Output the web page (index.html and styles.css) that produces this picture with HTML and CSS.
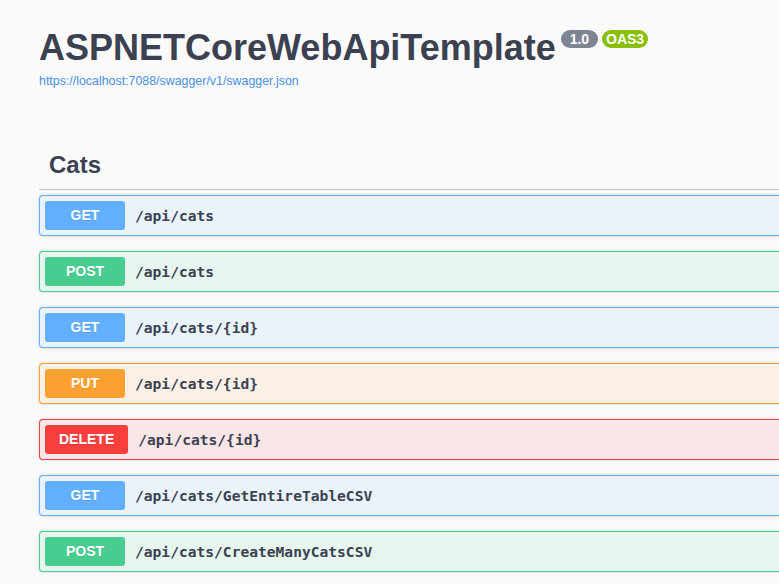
FILE: index.html
```html
<!DOCTYPE html>
<html lang="en">
<head>
<meta charset="utf-8">
<title>Swagger UI</title>
<link rel="stylesheet" href="styles.css">
</head>
<body>
<div class="wrapper">
  <div class="info">
    <h2 class="title"><span class="title-text">ASPNETCoreWebApiTemplate</span><small class="badge badge-version"><pre class="version"> 1.0 </pre></small><small class="badge badge-oas"><pre class="version">OAS3</pre></small></h2>
    <a class="base-url" href="#">https://localhost:7088/swagger/v1/swagger.json</a>
  </div>
  <div class="tag-section">
    <h3 class="tag">Cats</h3>
    <div class="opblock get"><span class="method">GET</span><span class="path">/api/cats</span></div>
    <div class="opblock post"><span class="method">POST</span><span class="path">/api/cats</span></div>
    <div class="opblock get"><span class="method">GET</span><span class="path">/api/cats/{id}</span></div>
    <div class="opblock put"><span class="method">PUT</span><span class="path">/api/cats/{id}</span></div>
    <div class="opblock delete"><span class="method">DELETE</span><span class="path">/api/cats/{id}</span></div>
    <div class="opblock get"><span class="method">GET</span><span class="path">/api/cats/GetEntireTableCSV</span></div>
    <div class="opblock post"><span class="method">POST</span><span class="path">/api/cats/CreateManyCatsCSV</span></div>
  </div>
</div>
</body>
</html>
```

FILE: styles.css
```css
html, body {
  margin: 0;
  padding: 0;
  background: #fafafa;
  overflow: hidden;
}

.wrapper {
  padding: 0 0 0 39px;
  font-family: "Liberation Sans", Arial, sans-serif;
  color: #3b4151;
}

.info {
  padding-top: 26px;
}

.title {
  margin: 0;
  display: flex;
  align-items: flex-start;
  font-size: 36px;
  line-height: 43px;
  font-weight: 700;
  color: #3b4151;
}

.badge {
  display: inline-block;
  margin-top: 4px;
  margin-left: 4px;
  padding: 2px 4px;
  border-radius: 57px;
  background: #7d8492;
  font-size: 14px;
  line-height: 14px;
}

.badge-version {
  margin-left: 5px;
  padding: 2px 5px;
}

.badge-oas {
  background: #89bf04;
  padding: 2px 4px;
}

.version {
  margin: 0;
  padding: 0;
  font-family: "Liberation Sans", Arial, sans-serif;
  font-size: 14px;
  line-height: 14px;
  font-weight: 700;
  color: #fff;
}

.base-url {
  display: block;
  margin-top: 5px;
  font-size: 12.4px;
  line-height: 15px;
  color: #4990e2;
  text-decoration: none;
}

.tag-section {
  margin-top: 52px;
}

.tag {
  margin: 0 0 5px;
  padding: 10px 20px 10px 10px;
  font-size: 24px;
  line-height: 28px;
  font-weight: 700;
  color: #3b4151;
  border-bottom: 1px solid rgba(59, 65, 81, 0.3);
}

.opblock {
  display: flex;
  align-items: center;
  margin-bottom: 15px;
  padding: 5px;
  border: 1px solid #000;
  border-right: 0;
  border-radius: 4px 0 0 4px;
  box-shadow: 0 0 3px rgba(0, 0, 0, 0.19);
}

.method {
  box-sizing: border-box;
  min-width: 80px;
  padding: 6px 14px;
  border-radius: 3px;
  font-family: "Liberation Sans", Arial, sans-serif;
  font-size: 14px;
  line-height: 17px;
  font-weight: 700;
  color: #fff;
  text-align: center;
  text-shadow: 0 1px 0 rgba(0, 0, 0, 0.1);
}

.path {
  padding: 0 10px;
  font-family: "DejaVu Sans Mono", "Liberation Mono", monospace;
  font-size: 14.6px;
  font-weight: 700;
  color: #3b4151;
}

.get { border-color: #61affe; background: rgba(97, 175, 254, 0.1); }
.get .method { background: #61affe; }

.post { border-color: #49cc90; background: rgba(73, 204, 144, 0.1); }
.post .method { background: #49cc90; }

.put { border-color: #fca130; background: rgba(252, 161, 48, 0.1); }
.put .method { background: #fca130; }

.delete { border-color: #f93e3e; background: rgba(249, 62, 62, 0.1); }
.delete .method { background: #f93e3e; }
```
